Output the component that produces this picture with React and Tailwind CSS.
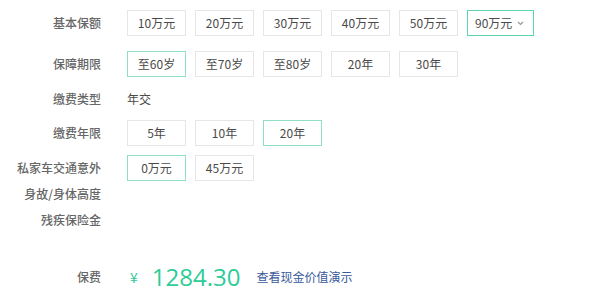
import React from "react";

const FONT = { fontFamily: '"Noto Sans CJK SC", "Noto Sans", sans-serif' };

function Btn({ children, selected, className = "" }) {
  return (
    <div
      className={`h-[26px] w-[59px] flex items-center justify-center border text-[12px] text-[#4a4a4a] bg-white ${
        selected ? "border-[#8fe0c6]" : "border-[#e6e6e6]"
      } ${className}`}
    >
      {children}
    </div>
  );
}

function Label({ children }) {
  return (
    <div className="w-[101px] shrink-0 text-right text-[12px] leading-[26px] text-[#666] font-medium">
      {children}
    </div>
  );
}

export default function App() {
  return (
    <div className="w-[600px] h-[297px] bg-white overflow-hidden" style={FONT}>
      <div className="pt-[10px]">
        <div className="flex items-start">
          <Label>基本保额</Label>
          <div className="ml-[26px] flex gap-[9px]">
            <Btn>10万元</Btn>
            <Btn>20万元</Btn>
            <Btn>30万元</Btn>
            <Btn>40万元</Btn>
            <Btn>50万元</Btn>
            <div className="h-[26px] w-[67px] flex items-center pl-[7px] border border-[#5dd6ae] text-[12px] text-[#4a4a4a]">
              <span>90万元</span>
              <svg width="7" height="5" viewBox="0 0 7 5" className="ml-[5px]">
                <path d="M1 1 L3.5 3.5 L6 1" fill="none" stroke="#999" strokeWidth="1.2" />
              </svg>
            </div>
          </div>
        </div>

        <div className="flex items-start mt-[15px]">
          <Label>保障期限</Label>
          <div className="ml-[26px] flex gap-[9px]">
            <Btn selected>至60岁</Btn>
            <Btn>至70岁</Btn>
            <Btn>至80岁</Btn>
            <Btn>20年</Btn>
            <Btn>30年</Btn>
          </div>
        </div>

        <div className="flex items-start mt-[9px]">
          <Label>缴费类型</Label>
          <div className="ml-[26px] text-[12px] leading-[26px] text-[#4a4a4a]">年交</div>
        </div>

        <div className="flex items-start mt-[8px]">
          <Label>缴费年限</Label>
          <div className="ml-[26px] flex gap-[9px]">
            <Btn>5年</Btn>
            <Btn>10年</Btn>
            <Btn selected>20年</Btn>
          </div>
        </div>

        <div className="flex items-start mt-[9px]">
          <Label>
            私家车交通意外
            <br />
            身故/身体高度
            <br />
            残疾保险金
          </Label>
          <div className="ml-[26px] flex gap-[9px]">
            <Btn selected>0万元</Btn>
            <Btn>45万元</Btn>
          </div>
        </div>

        <div className="flex items-center mt-[31px] h-[26px]">
          <Label>保费</Label>
          <div className="ml-[29px] flex items-center text-[#2fcb98]">
            <span className="text-[14px] leading-none">¥</span>
            <span
              className="ml-[14px] text-[24px] leading-none"
              style={{ fontFamily: '"Open Sans", "Liberation Sans", sans-serif' }}
            >
              1284.30
            </span>
            <span className="ml-[16px] text-[12px] text-[#3a5a9a]">查看现金价值演示</span>
          </div>
        </div>
      </div>
    </div>
  );
}
